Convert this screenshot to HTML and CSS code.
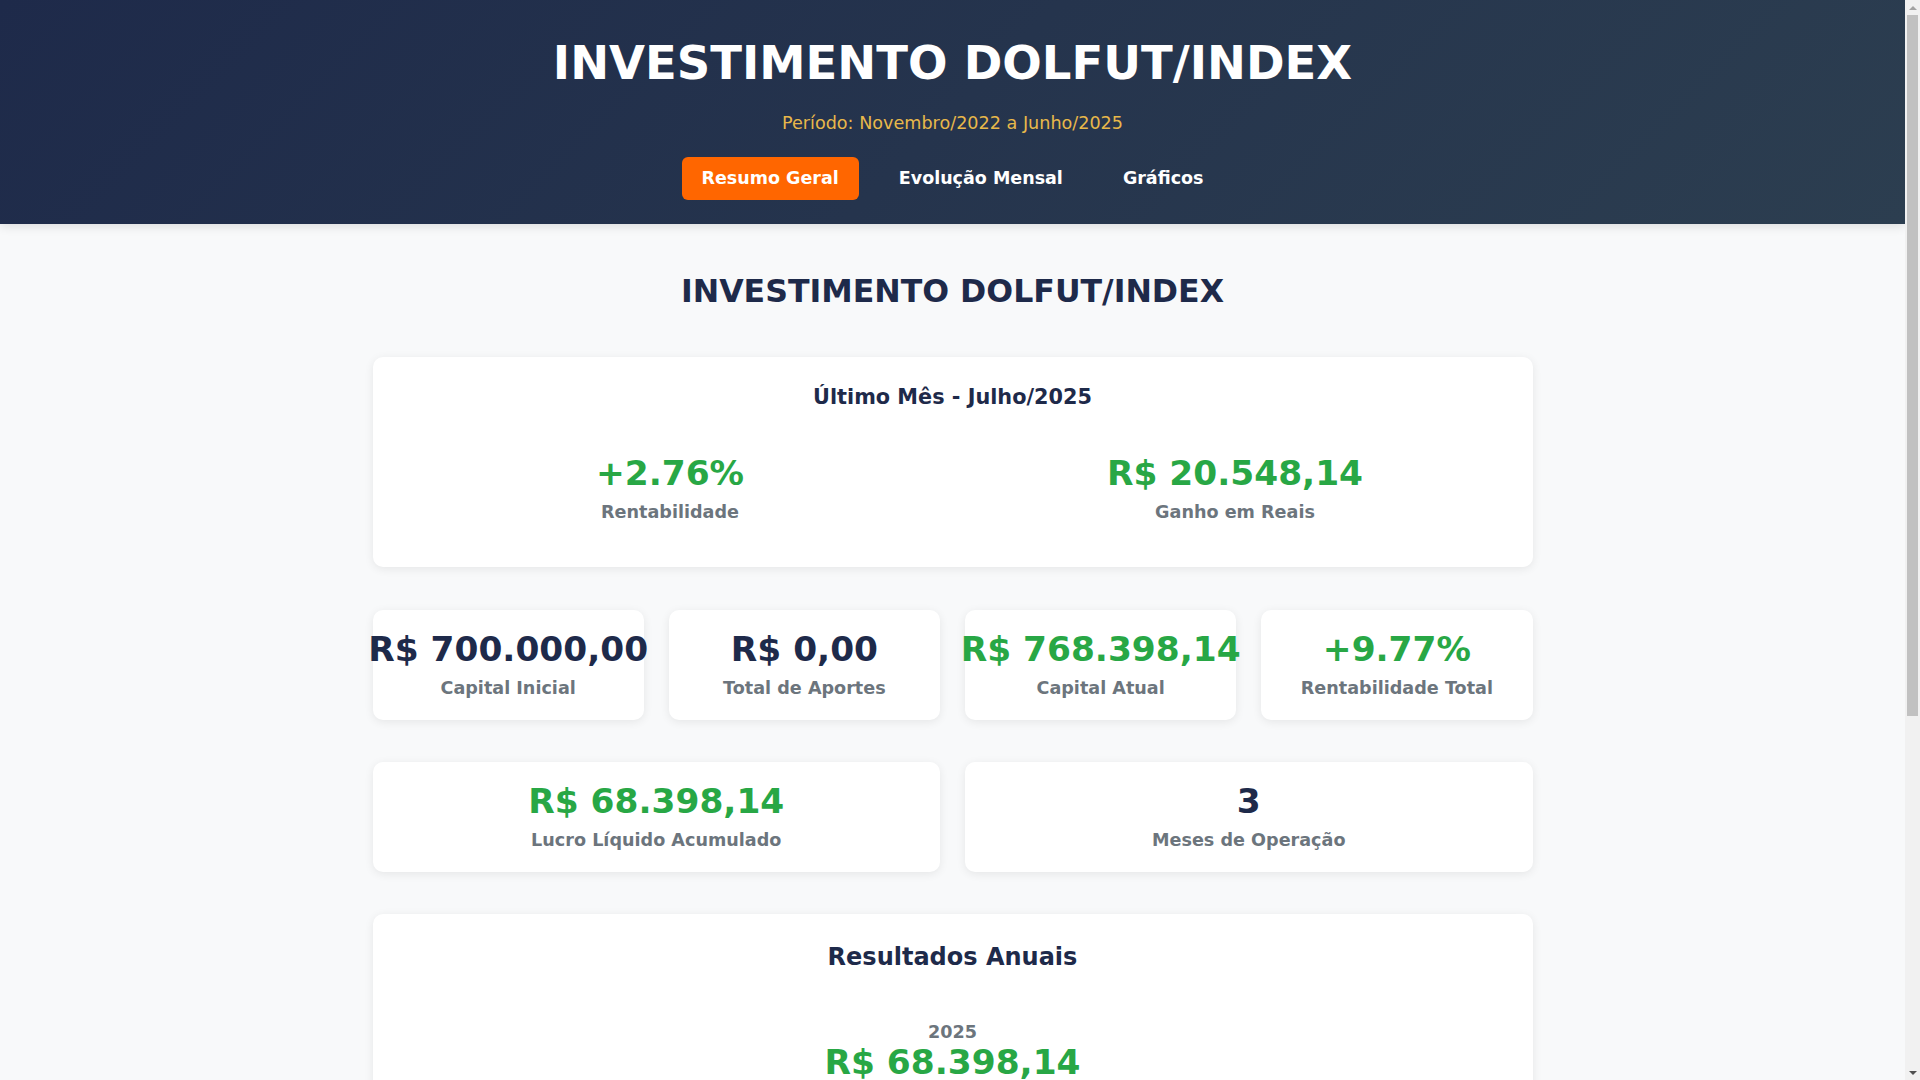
FILE: index.html
```html
<!DOCTYPE html>
<html lang="pt-BR">
<head>
<meta charset="utf-8">
<title>Investimento DOLFUT/INDEX</title>
<link rel="stylesheet" href="styles.css">
</head>
<body>
<header class="header">
  <h1 class="header-title">INVESTIMENTO DOLFUT/INDEX</h1>
  <p class="header-period">Período: Novembro/2022 a Junho/2025</p>
  <nav class="nav">
    <a class="nav-btn active">Resumo Geral</a>
    <a class="nav-btn">Evolução Mensal</a>
    <a class="nav-btn">Gráficos</a>
  </nav>
</header>
<main class="container">
  <h2 class="page-title">INVESTIMENTO DOLFUT/INDEX</h2>

  <section class="card month-card">
    <h3 class="month-title">Último Mês - Julho/2025</h3>
    <div class="month-grid">
      <div class="month-item">
        <div class="value green">+2.76%</div>
        <div class="label">Rentabilidade</div>
      </div>
      <div class="month-item">
        <div class="value green">R$ 20.548,14</div>
        <div class="label">Ganho em Reais</div>
      </div>
    </div>
  </section>

  <section class="stats stats-4">
    <div class="card stat">
      <div class="value navy">R$ 700.000,00</div>
      <div class="label">Capital Inicial</div>
    </div>
    <div class="card stat">
      <div class="value navy">R$ 0,00</div>
      <div class="label">Total de Aportes</div>
    </div>
    <div class="card stat">
      <div class="value green">R$ 768.398,14</div>
      <div class="label">Capital Atual</div>
    </div>
    <div class="card stat">
      <div class="value green">+9.77%</div>
      <div class="label">Rentabilidade Total</div>
    </div>
  </section>

  <section class="stats stats-2">
    <div class="card stat">
      <div class="value green">R$ 68.398,14</div>
      <div class="label">Lucro Líquido Acumulado</div>
    </div>
    <div class="card stat">
      <div class="value navy">3</div>
      <div class="label">Meses de Operação</div>
    </div>
  </section>

  <section class="card annual-card">
    <h3 class="annual-title">Resultados Anuais</h3>
    <div class="annual-item">
      <div class="label year">2025</div>
      <div class="value green">R$ 68.398,14</div>
    </div>
  </section>
</main>
<div class="scrollbar" aria-hidden="true">
  <span class="sb-arrow sb-up"></span>
  <span class="sb-track"><span class="sb-thumb"></span></span>
  <span class="sb-arrow sb-down"></span>
</div>
</body>
</html>
```

FILE: styles.css
```css
* { box-sizing: border-box; }

body {
  margin: 0 15px 0 0;
  background: #f8f9fa;
  font-family: "DejaVu Sans", "Noto Sans", sans-serif;
  color: #1e2a4a;
}

.header {
  background: linear-gradient(135deg, #1e2a4a 0%, #2c3e50 100%);
  color: #fff;
  text-align: center;
  padding: 36px 20px 24.5px;
  box-shadow: 0 2px 10px rgba(0, 0, 0, 0.12);
}

.header-title {
  margin: 0;
  font-size: 46.5px;
  line-height: 54px;
  font-weight: bold;
}

.header-period {
  margin: 23px 0 0;
  font-size: 17.6px;
  line-height: 20px;
  color: #e8b84a;
}

.nav {
  display: flex;
  justify-content: center;
  gap: 20px;
  margin-top: 23.5px;
}

.nav-btn {
  display: block;
  padding: 11px 20px;
  font-size: 17.5px;
  line-height: 21px;
  font-weight: bold;
  color: #fff;
  border-radius: 6px;
}

.nav-btn.active {
  background: #ff6600;
}

.container {
  max-width: 1200px;
  margin: 0 auto;
  padding: 0 20px 300px;
}

.page-title {
  margin: 49.5px 0 48.5px;
  text-align: center;
  font-size: 31.6px;
  line-height: 35px;
  font-weight: bold;
  color: #1e2a4a;
}

.card {
  background: #fff;
  border-radius: 10px;
  box-shadow: 0 2px 10px rgba(0, 0, 0, 0.08);
}

.value {
  font-size: 34.4px;
  line-height: 40px;
  font-weight: bold;
  white-space: nowrap;
}

.label {
  font-size: 17.6px;
  line-height: 20px;
  font-weight: bold;
  color: #6c757d;
}

.green { color: #28a745; }
.navy { color: #1e2a4a; }

.month-card {
  padding: 28px 30px 45px;
  text-align: center;
  margin-bottom: 43px;
}

.month-title {
  margin: 0 0 44px;
  font-size: 20.8px;
  line-height: 24px;
  font-weight: bold;
}

.month-grid {
  display: grid;
  grid-template-columns: minmax(0, 1fr) minmax(0, 1fr);
  gap: 30px;
}

.month-item .value {
  margin-bottom: 9px;
}

.stats {
  display: grid;
  gap: 25px;
  margin-bottom: 42px;
}

.stats-4 { grid-template-columns: repeat(4, minmax(0, 1fr)); }
.stats-2 { grid-template-columns: repeat(2, minmax(0, 1fr)); }

.stat {
  text-align: center;
  padding: 19px 0 22px;
  height: 110px;
  display: flex;
  flex-direction: column;
  align-items: center;
}

.stat .value {
  margin-bottom: 9px;
}

.annual-card {
  padding: 29px 30px 40px;
  text-align: center;
}

.annual-title {
  margin: 0 0 51px;
  font-size: 24px;
  line-height: 28px;
  font-weight: bold;
}

.annual-item .year {
  line-height: 20px;
}

/* browser scrollbar as it appears in the screenshot */
.scrollbar {
  position: fixed;
  top: 0;
  right: 0;
  width: 15px;
  height: 100vh;
  background: #f1f1f1;
  display: flex;
  flex-direction: column;
  align-items: center;
}

.sb-arrow {
  flex: 0 0 15px;
  width: 15px;
  display: flex;
  align-items: center;
  justify-content: center;
}

.sb-arrow::before {
  content: "";
  width: 0;
  height: 0;
  border-left: 4px solid transparent;
  border-right: 4px solid transparent;
}

.sb-up::before {
  border-bottom: 4px solid #a3a3a3;
}

.sb-down::before {
  border-top: 4px solid #505050;
}

.sb-track {
  flex: 1;
  width: 15px;
  display: flex;
  justify-content: center;
}

.sb-thumb {
  width: 11px;
  height: 701px;
  background: #c1c1c1;
}
```
